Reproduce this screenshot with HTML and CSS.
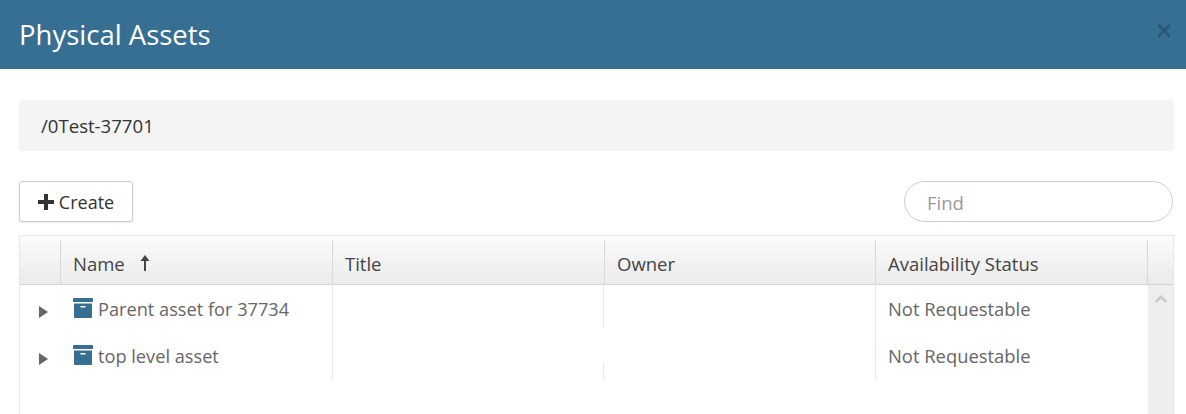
FILE: index.html
```html
<!DOCTYPE html>
<html lang="en">
<head>
    <meta charset="UTF-8">
    <title>Physical Assets</title>
    <link rel="stylesheet" href="styles.css">
</head>
<body>
    <div class="modal-header">
        <h1>Physical Assets</h1>
        <span class="close">&times;</span>
    </div>
    <div class="modal-body">
        <div class="breadcrumb">/0Test-37701</div>
        <div class="toolbar">
            <button type="button" class="btn">
                <svg class="plus" viewBox="0 0 16 16"><path d="M6 0h4v6h6v4h-6v6H6v-6H0V6h6z"/></svg>
                <span class="btn-label">Create</span>
            </button>
            <input class="find" type="text" placeholder="Find">
        </div>
        <div class="grid">
            <div class="grid-head">
                <div class="th th-toggle"></div>
                <div class="th th-name">Name
                    <svg class="sort" viewBox="0 0 12 18"><path d="M6 1l4.500 6H7v10H5V7H1.500z"/></svg>
                </div>
                <div class="th th-title">Title</div>
                <div class="th th-owner">Owner</div>
                <div class="th th-status">Availability Status</div>
                <div class="th th-end"></div>
            </div>
            <div class="grid-content">
                <div class="rows">
                    <div class="row row-first">
                        <div class="td td-toggle"><span class="arrow"></span></div>
                        <div class="td td-name">
                            <svg class="box" viewBox="0 0 20 20"><path d="M1 0h18a1 1 0 0 1 1 1v3H0V1a1 1 0 0 1 1-1zM1 5.500h18V19a1 1 0 0 1-1 1H2a1 1 0 0 1-1-1zM7.500 8v1.500h5V8z" fill-rule="evenodd"/></svg>
                            Parent asset for 37734
                        </div>
                        <div class="td td-title"></div>
                        <div class="td td-owner"></div>
                        <div class="td td-status">Not Requestable</div>
                    </div>
                    <div class="row row-second">
                        <div class="td td-toggle"><span class="arrow"></span></div>
                        <div class="td td-name">
                            <svg class="box" viewBox="0 0 20 20"><path d="M1 0h18a1 1 0 0 1 1 1v3H0V1a1 1 0 0 1 1-1zM1 5.500h18V19a1 1 0 0 1-1 1H2a1 1 0 0 1-1-1zM7.500 8v1.500h5V8z" fill-rule="evenodd"/></svg>
                            top level asset
                        </div>
                        <div class="td td-title"></div>
                        <div class="td td-owner"></div>
                        <div class="td td-status">Not Requestable</div>
                    </div>
                </div>
                <div class="scrollbar">
                    <svg class="chevron" viewBox="0 0 14 10"><path d="M7 1l6 6-1.800 1.800L7 4.600 2.800 8.800 1 7z"/></svg>
                </div>
            </div>
        </div>
    </div>
</body>
</html>
```

FILE: styles.css
```css
html, body { height: 100%; }
body { margin: 0; height: 414px; overflow: hidden; background: #fff; font-family: "Open Sans", "Noto Sans", sans-serif; color: #555; }

.modal-header { height: 69px; background: #376f92; display: flex; align-items: center; justify-content: space-between; padding: 0 14px 0 19px; box-sizing: border-box; }
.modal-header h1 { margin: 0; font-size: 27.500px; font-weight: 400; color: #fff; }
.close { font-size: 27px; font-weight: 700; line-height: 1; color: #2b5a78; margin-bottom: 7px; font-family: "Liberation Sans", sans-serif; }

.modal-body { padding: 31px 12px 0 19px; }
.breadcrumb { height: 51px; background: #f4f4f4; border-radius: 3px; padding-left: 22px; display: flex; align-items: center; font-size: 18.600px; color: #333; }

.toolbar { display: flex; justify-content: space-between; margin-top: 30px; height: 41px; }
.btn { width: 114px; height: 41px; background: #fff; border: 1px solid #ccc; border-radius: 3px; box-shadow: 0 1px 1px rgba(0,0,0,.08); display: flex; align-items: center; justify-content: center; gap: 5px; padding: 0; font-family: inherit; font-size: 18px; color: #333; }
.btn-label { padding-top: 1px; }
.plus { width: 16px; height: 16px; fill: #333; }
.find { width: 269px; height: 41px; box-sizing: border-box; border: 1px solid #ccc; border-radius: 21px; padding: 2px 22px 0; font-family: inherit; font-size: 18.500px; color: #555; margin-right: 1px; outline: none; }
.find::placeholder { color: #999; opacity: 1; }

.grid { margin-top: 13px; height: 179px; border: 1px solid #e8e8e8; border-bottom: none; box-sizing: border-box; }
.grid-head { display: flex; height: 49px; box-sizing: border-box; padding-top: 4px; background: linear-gradient(#fbfbfb, #ebebeb); border-bottom: 1px solid #d3d3d3; font-size: 18.500px; color: #444; }
.th { box-sizing: border-box; border-right: 1px solid #d9d9d9; display: flex; align-items: center; padding-left: 12px; padding-top: 2px; }
.th-toggle { width: 41px; }
.th-name { width: 272px; }
.th-title { width: 272px; }
.th-owner { width: 271px; }
.th-status { width: 272px; }
.th-end { flex: 1; border-right: none; }
.sort { width: 12px; height: 18px; margin-left: 14px; margin-bottom: 0; fill: #444; }

.grid-content { display: flex; height: 129px; }
.rows { width: 1128px; }
.row { display: flex; height: 47px; }
.td { box-sizing: border-box; display: flex; align-items: center; padding-left: 12px; font-size: 18.400px; color: #666; }
.td-toggle { width: 41px; padding-left: 19px; padding-top: 6px; }
.td-name { width: 272px; gap: 5px; border-right: 1px solid #e6e6e6; font-size: 18.200px; }
.td-title { width: 271px; background: linear-gradient(#e6e6e6, #e6e6e6) right top / 1px 43px no-repeat; }
.row-second .td-title { background-position: right bottom; background-size: 1px 17px; }
.td-owner { width: 272px; border-right: 1px solid #e6e6e6; }
.td-status { width: 272px; }
.arrow { width: 0; height: 0; border-left: 9px solid #666; border-top: 6px solid transparent; border-bottom: 6px solid transparent; }
.box { width: 20px; height: 20px; fill: #376f92; margin-bottom: 1px; }
.scrollbar { flex: 1; background: #eee; display: flex; justify-content: center; padding-top: 9px; box-sizing: border-box; }
.chevron { width: 14px; height: 10px; fill: #c8c8c8; }
```
